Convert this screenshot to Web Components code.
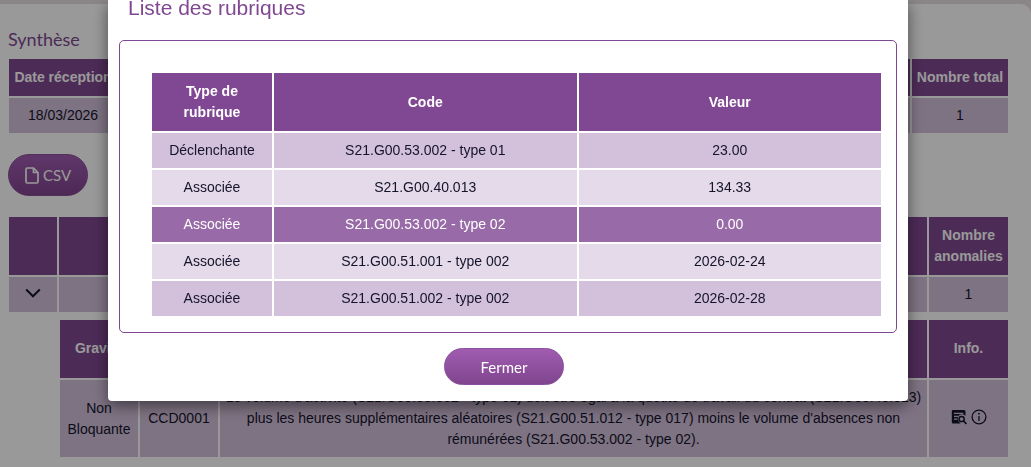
<!DOCTYPE html>
<html lang="fr">
<head>
<meta charset="utf-8">
<meta name="viewport" content="width=device-width, initial-scale=1">
<title>Liste des rubriques</title>
<style>
  :root {
    --violet: #804892;
    --violet-mid: #986aa7;
    --cell: #d3c0db;
    --cell-light: #e5dae9;
    --ink: #14142b;
  }
  body {
    margin: 0;
    font: 14px/21px "Liberation Sans", Arial, sans-serif;
    color: var(--ink);
    background: #e6dfe2;
  }
</style>
</head>
<body>
<report-page>
  <section-title>Synthèse</section-title>
  <summary-table></summary-table>
  <tool-bar>
    <pill-button>
      <svg slot="icon" width="14" height="17" viewBox="0 0 14 17" fill="none" stroke="currentColor" stroke-width="1.7" stroke-linejoin="round" aria-hidden="true"><path d="M8.500 1H2.400Q1 1 1 2.400v12.200Q1 16 2.400 16h9.200q1.400 0 1.400-1.400V5.500zM8.500 1v4.500H13"/></svg>
      CSV
    </pill-button>
  </tool-bar>
  <anomaly-table></anomaly-table>
  <anomaly-detail></anomaly-detail>
</report-page>
<modal-dialog label="Liste des rubriques">
  <rubric-table></rubric-table>
  <pill-button slot="actions" kind="dialog">Fermer</pill-button>
</modal-dialog>

<script>
const tableStyle = `
  :host { display: block; }
  table { width: 100%; table-layout: fixed; border-collapse: separate; border-spacing: 2px; }
  th, td { box-sizing: border-box; text-align: center; vertical-align: middle; }
  th { padding: 8px 4px; background: var(--violet); color: #fff; font-weight: bold; }
  td { padding: 7px 5px; background: var(--cell); }
  button { display: inline-block; padding: 0; border: 0; background: none; color: inherit; vertical-align: middle; }
  svg { display: block; }
`;

function define(name, css, html, setup) {
  const template = document.createElement("template");
  template.innerHTML = `<style>${css}</style>${html}`;
  customElements.define(name, class extends HTMLElement {
    constructor() {
      super();
      this.attachShadow({ mode: "open" }).append(template.content.cloneNode(true));
    }
    connectedCallback() {
      if (setup) setup(this, this.shadowRoot);
    }
  });
}

define("report-page", `
  :host { display: flex; min-height: 100vh; box-sizing: border-box; padding-top: 4px; }
  main { flex: 1; min-width: 0; box-sizing: border-box; padding: 24px 21px 8px 7px; background: #fff; border-radius: 0 10px 0 0; }
`, `<main><slot></slot></main>`);

define("section-title", `
  :host { display: block; padding: 0 1px 7px; }
  h2 { margin: 0; font: 18px/22px Lato, sans-serif; color: var(--violet); }
`, `<h2><slot></slot></h2>`);

define("tool-bar", `
  :host { display: flex; padding: 19px 1px; }
`, `<slot></slot>`);

define("pill-button", `
  :host { display: inline-flex; }
  button {
    display: flex; align-items: center; justify-content: center; gap: 4px;
    min-width: 80px; height: 42px; padding: 0 16px;
    border: 1px solid #8a4f9b; border-radius: 21px;
    background: linear-gradient(#a05cb0, #80458f);
    color: #fff; font: 15px/20px Lato, sans-serif;
  }
  :host([kind="dialog"]) button { min-width: 120px; height: 37px; }
`, `<button type="button"><slot name="icon"></slot><span><slot></slot></span></button>`);

define("summary-table", tableStyle + `
  th { white-space: nowrap; }
`, `
  <table>
    <colgroup><col style="width:108px"><col><col><col style="width:96px"></colgroup>
    <thead><tr><th scope="col">Date réception</th><th></th><th></th><th scope="col">Nombre total</th></tr></thead>
    <tbody><tr><td>18/03/2026</td><td></td><td></td><td>1</td></tr></tbody>
  </table>`);

define("anomaly-table", tableStyle, `
  <table>
    <colgroup><col style="width:48px"><col><col style="width:79px"></colgroup>
    <thead><tr><th></th><th></th><th scope="col">Nombre anomalies</th></tr></thead>
    <tbody><tr>
      <td><button type="button" aria-label="Replier" aria-expanded="true"><svg width="16" height="16" viewBox="0 0 16 16" fill="none" stroke="currentColor" stroke-width="2" aria-hidden="true"><path d="M1.200 2.500 8 9.300l6.800-6.800"/></svg></button></td>
      <td></td><td>1</td>
    </tr></tbody>
  </table>`);

define("anomaly-detail", tableStyle + `
  :host { margin: 4px 0 0 51px; }
  th { height: 58px; padding: 8px 4px 10px; }
  .icons { display: flex; justify-content: center; gap: 4px; padding-bottom: 4px; }
`, `
  <table>
    <colgroup><col style="width:78px"><col style="width:78px"><col><col style="width:79px"></colgroup>
    <thead><tr><th scope="col">Gravité</th><th></th><th></th><th scope="col">Info.</th></tr></thead>
    <tbody><tr>
      <td>Non Bloquante</td>
      <td>CCD0001</td>
      <td>Le volume d'activité (S21.G00.53.002 - type 01) doit être égal à la quotité de travail du contrat (S21.G00.40.013) plus les heures supplémentaires aléatoires (S21.G00.51.012 - type 017) moins le volume d'absences non rémunérées (S21.G00.53.002 - type 02).</td>
      <td><div class="icons">
        <button type="button" aria-label="Rubriques"><svg width="16" height="16" viewBox="0 0 16 16" fill="none" stroke="currentColor" aria-hidden="true"><path fill="currentColor" stroke="none" fill-rule="evenodd" d="M2 1h11q1.500 0 1.500 1.500V7a4.300 4.300 0 0 0-7 5.200l2 2.300H2Q.8 14.500 .8 13.300V2.200Q.8 1 2 1zM3 3.800v1.200h9.200V3.800zM3 6.700v1.200h3.600l.9-1.200zM3 9.600v1.200h3V9.600z"/><circle cx="10.600" cy="10" r="2.600" stroke-width="1.500"/><path d="m12.600 12 2.800 2.800" stroke-width="1.700"/></svg></button>
        <button type="button" aria-label="Informations"><svg width="16" height="16" viewBox="0 0 16 16" fill="none" stroke="currentColor" aria-hidden="true"><circle cx="8" cy="8" r="6.900" stroke-width="1.300"/><path d="M8 7v5" stroke-width="1.300"/><circle cx="8" cy="4.700" r=".9" fill="currentColor" stroke="none"/></svg></button>
      </div></td>
    </tr></tbody>
  </table>`);

define("modal-dialog", `
  :host {
    position: fixed; inset: 0; box-sizing: border-box; padding-right: 15px;
    display: flex; justify-content: center; align-items: flex-start;
    background: rgba(0, 0, 0, .4);
  }
  .panel {
    box-sizing: border-box; width: 800px; max-width: 100%; padding: 0 11px 16px;
    background: #fff; border-radius: 0 0 4px 4px;
    box-shadow: 0 5px 15px rgba(0, 0, 0, .5);
  }
  h1 { margin: 0; padding: 0 9px 24px; font-size: 21px; line-height: 16px; font-weight: normal; color: var(--violet); }
  .frame { padding: 30px 13px 14px 30px; border: 1px solid var(--violet); border-radius: 5px; }
  footer { display: flex; justify-content: center; padding: 15px 8px 0 0; }
`, `
  <div class="panel" role="dialog" aria-modal="true" aria-labelledby="title">
    <h1 id="title"></h1>
    <div class="frame"><slot></slot></div>
    <footer><slot name="actions"></slot></footer>
  </div>`, (host, root) => {
    root.getElementById("title").textContent = host.getAttribute("label");
  });

define("rubric-table", tableStyle + `
  tbody tr:nth-child(even) td { background: var(--cell-light); }
  tbody tr.current td { background: var(--violet-mid); color: #fff; }
`, `
  <table>
    <colgroup><col style="width:120px"><col><col></colgroup>
    <thead><tr><th scope="col">Type de<br>rubrique</th><th scope="col">Code</th><th scope="col">Valeur</th></tr></thead>
    <tbody>
      <tr><td>Déclenchante</td><td>S21.G00.53.002 - type 01</td><td>23.00</td></tr>
      <tr><td>Associée</td><td>S21.G00.40.013</td><td>134.33</td></tr>
      <tr class="current"><td>Associée</td><td>S21.G00.53.002 - type 02</td><td>0.00</td></tr>
      <tr><td>Associée</td><td>S21.G00.51.001 - type 002</td><td>2026-02-24</td></tr>
      <tr><td>Associée</td><td>S21.G00.51.002 - type 002</td><td>2026-02-28</td></tr>
    </tbody>
  </table>`);
</script>
</body>
</html>
